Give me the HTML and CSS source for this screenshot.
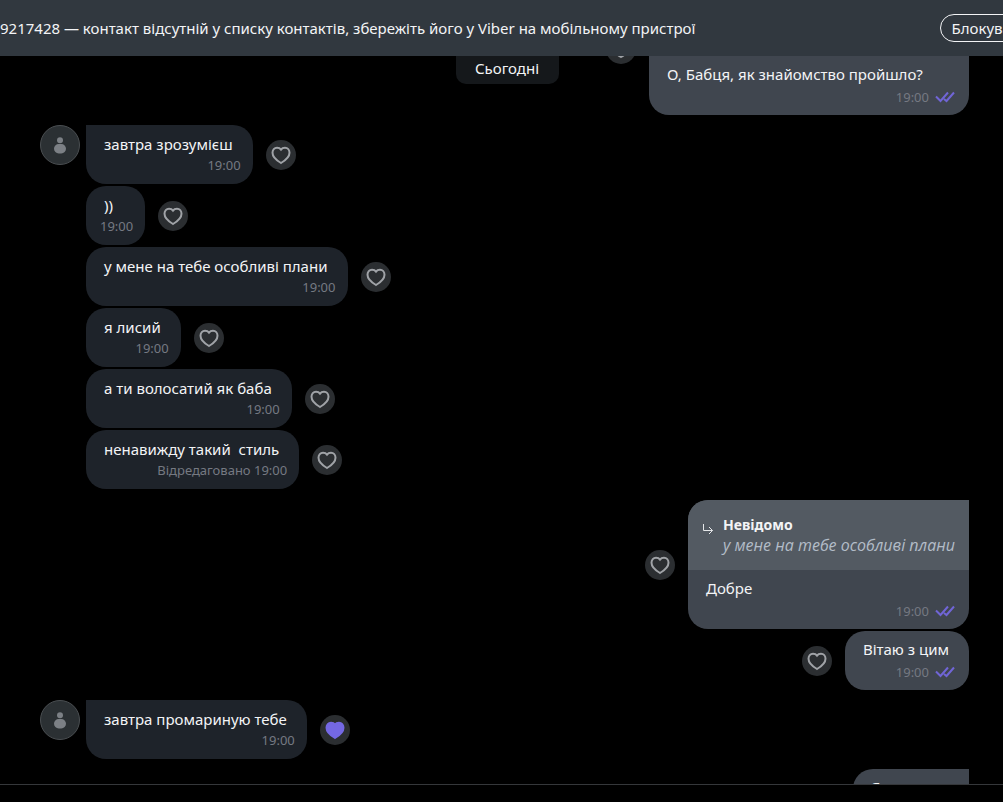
FILE: index.html
```html
<!DOCTYPE html>
<html lang="uk">
<head>
<meta charset="utf-8">
<title>Viber</title>
<link rel="stylesheet" href="styles.css">
</head>
<body>
<svg class="sprite" aria-hidden="true">
  <symbol id="heart" viewBox="0 0 20 20"><path d="M10 18C7.200 16.400 1.500 12.800 1.500 7.800C1.500 4.800 3.400 2.800 6 2.800C7.800 2.800 9.200 3.500 10 4.600C10.800 3.500 12.200 2.800 14 2.800C16.600 2.800 18.500 4.800 18.500 7.800C18.500 12.800 12.800 16.400 10 18Z"/></symbol>
  <symbol id="person" viewBox="0 0 12 17"><circle cx="6" cy="3.300" r="3"/><rect x="0" y="7" width="12" height="9.500" rx="4.700"/></symbol>
  <symbol id="checks" viewBox="0 0 20 12"><path d="M1 5.500L5.500 10L13 1.500M9 8L11.500 10L19 1.500"/></symbol>
  <symbol id="reply" viewBox="0 0 12 12"><path d="M1.500 1V7.500H10.500M7 4L10.500 7.500L7 11"/></symbol>
</svg>
<div class="app">
  <header class="banner">
    <p class="banner-text">9217428 — контакт відсутній у списку контактів, збережіть його у Viber на мобільному пристрої</p>
    <button class="block" type="button">Блокувати</button>
  </header>
  <main class="chat">
    <div class="date">Сьогодні</div>
    <section class="group out">
      <div class="row scrolled">
        <button class="like" type="button" aria-label="Вподобати"><svg><use href="#heart"/></svg></button>
        <div class="bubble"><p class="text">О, Бабця, як знайомство пройшло?</p><p class="meta">19:00 <svg class="checks"><use href="#checks"/></svg></p></div>
      </div>
    </section>
    <section class="group in">
      <div class="avatar"><svg><use href="#person"/></svg></div>
      <div class="rows">
        <div class="row"><div class="bubble"><p class="text">завтра зрозумієш</p><p class="meta">19:00</p></div><button class="like" type="button" aria-label="Вподобати"><svg><use href="#heart"/></svg></button></div>
        <div class="row"><div class="bubble"><p class="text">))</p><p class="meta">19:00</p></div><button class="like" type="button" aria-label="Вподобати"><svg><use href="#heart"/></svg></button></div>
        <div class="row"><div class="bubble"><p class="text">у мене на тебе особливі плани</p><p class="meta">19:00</p></div><button class="like" type="button" aria-label="Вподобати"><svg><use href="#heart"/></svg></button></div>
        <div class="row"><div class="bubble"><p class="text">я лисий</p><p class="meta">19:00</p></div><button class="like" type="button" aria-label="Вподобати"><svg><use href="#heart"/></svg></button></div>
        <div class="row"><div class="bubble"><p class="text">а ти волосатий як баба</p><p class="meta">19:00</p></div><button class="like" type="button" aria-label="Вподобати"><svg><use href="#heart"/></svg></button></div>
        <div class="row"><div class="bubble"><p class="text">ненавижду такий&nbsp; стиль</p><p class="meta">Відредаговано 19:00</p></div><button class="like" type="button" aria-label="Вподобати"><svg><use href="#heart"/></svg></button></div>
      </div>
    </section>
    <section class="group out">
      <div class="row">
        <button class="like" type="button" aria-label="Вподобати"><svg><use href="#heart"/></svg></button>
        <div class="bubble">
          <div class="quote"><svg class="reply"><use href="#reply"/></svg><div><p class="quote-name">Невідомо</p><p class="quote-text">у мене на тебе особливі плани</p></div></div>
          <p class="text">Добре</p><p class="meta">19:00 <svg class="checks"><use href="#checks"/></svg></p>
        </div>
      </div>
      <div class="row">
        <button class="like" type="button" aria-label="Вподобати"><svg><use href="#heart"/></svg></button>
        <div class="bubble"><p class="text">Вітаю з цим</p><p class="meta">19:00 <svg class="checks"><use href="#checks"/></svg></p></div>
      </div>
    </section>
    <section class="group in">
      <div class="avatar"><svg><use href="#person"/></svg></div>
      <div class="rows">
        <div class="row"><div class="bubble"><p class="text">завтра промариную тебе</p><p class="meta">19:00</p></div><button class="like liked" type="button" aria-label="Вподобано"><svg><use href="#heart"/></svg></button></div>
      </div>
    </section>
    <section class="group out">
      <div class="row">
        <button class="like" type="button" aria-label="Вподобати"><svg><use href="#heart"/></svg></button>
        <div class="bubble"><p class="text">Я не проти</p><p class="meta">19:00 <svg class="checks"><use href="#checks"/></svg></p></div>
      </div>
    </section>
  </main>
  <footer class="composer"></footer>
</div>
</body>
</html>
```
FILE: styles.css
```css
* { box-sizing: border-box; }
body { margin: 0; background: #000; color: #f3f4f6; font: 15px/20px "Noto Sans", "Open Sans", sans-serif; }
p { margin: 0; }
button { font: inherit; color: inherit; padding: 0; }
.sprite { display: none; }
.app { display: flex; flex-direction: column; height: 100vh; overflow: hidden; }
.banner { display: flex; align-items: center; justify-content: space-between; height: 56px; flex: none; background: #31383f; }
.banner-text { white-space: nowrap; }
.block { flex: none; height: 28px; padding: 0 11px; margin-right: -36px; border: 1px solid #f3f4f6; border-radius: 14px; background: transparent; }
.chat { position: relative; flex: 1; min-height: 0; overflow: hidden; display: flex; flex-direction: column; gap: 10px; padding: 0 34px 0 40px; }
.date { position: absolute; top: 0; left: 50%; width: 103px; margin-left: -46px; height: 28px; padding-top: 2px; text-align: center; background: #15181b; border-radius: 0 0 10px 10px; }
.group { display: flex; flex: none; }
.in { gap: 6px; align-items: flex-start; padding-bottom: 1px; }
.in:nth-last-child(2) { padding-bottom: 0; }
.rows, .out { display: flex; flex-direction: column; gap: 2px; }
.out { align-items: flex-end; }
.row { display: flex; align-items: center; gap: 13px; }
.bubble { min-height: 59px; padding: 9px 12px 9px 18px; border-radius: 20px; overflow: hidden; background: #1e232a; }
.out .bubble { padding: 8px 14px 8px 18px; background: #40464f; }
.in .row:first-child .bubble { border-top-left-radius: 0; }
.out .row:first-child .bubble { border-top-right-radius: 0; }
.scrolled { align-items: flex-start; }
.out .scrolled .bubble { min-width: 320px; border-top-left-radius: 0; }
.scrolled .like { margin-top: -22px; }
.text { padding-right: 8px; white-space: nowrap; }
.out .text { padding-right: 6px; }
.meta { display: flex; justify-content: flex-end; align-items: center; gap: 6px; margin-top: 1px; margin-left: -4px; font-size: 13px; color: #757982; white-space: nowrap; }
.out .meta { margin-top: 3px; }
.checks { width: 20px; height: 12px; fill: none; stroke: #7065d6; stroke-width: 2; }
.like { flex: none; display: grid; place-items: center; width: 30px; height: 30px; border: 0; border-radius: 50%; background: #2b2e31; }
.like svg { width: 20px; height: 20px; fill: none; stroke: #a0a3a7; stroke-width: 2; }
.liked svg { fill: #7468e4; stroke: #7468e4; }
.avatar { flex: none; display: grid; place-items: center; width: 40px; height: 40px; border: 1px solid #4a4e51; border-radius: 50%; background: #2b3033; }
.avatar svg { width: 12px; height: 17px; fill: #7c8085; }
.quote { display: flex; gap: 9px; margin: -8px -14px 8px -18px; height: 70px; padding: 15px 14px 0 14px; background: #535a62; }
.reply { flex: none; width: 12px; height: 12px; margin-top: 8px; fill: none; stroke: #e5e7e9; stroke-width: 1; }
.quote-name { font-weight: 700; font-size: 14px; }
.quote-text { font-family: "Open Sans", "Noto Sans", sans-serif; font-size: 16px; font-style: italic; color: #b3bdc8; white-space: nowrap; }
.composer { flex: none; height: 18px; border-top: 1px solid #35373a; background: #000; }
```
